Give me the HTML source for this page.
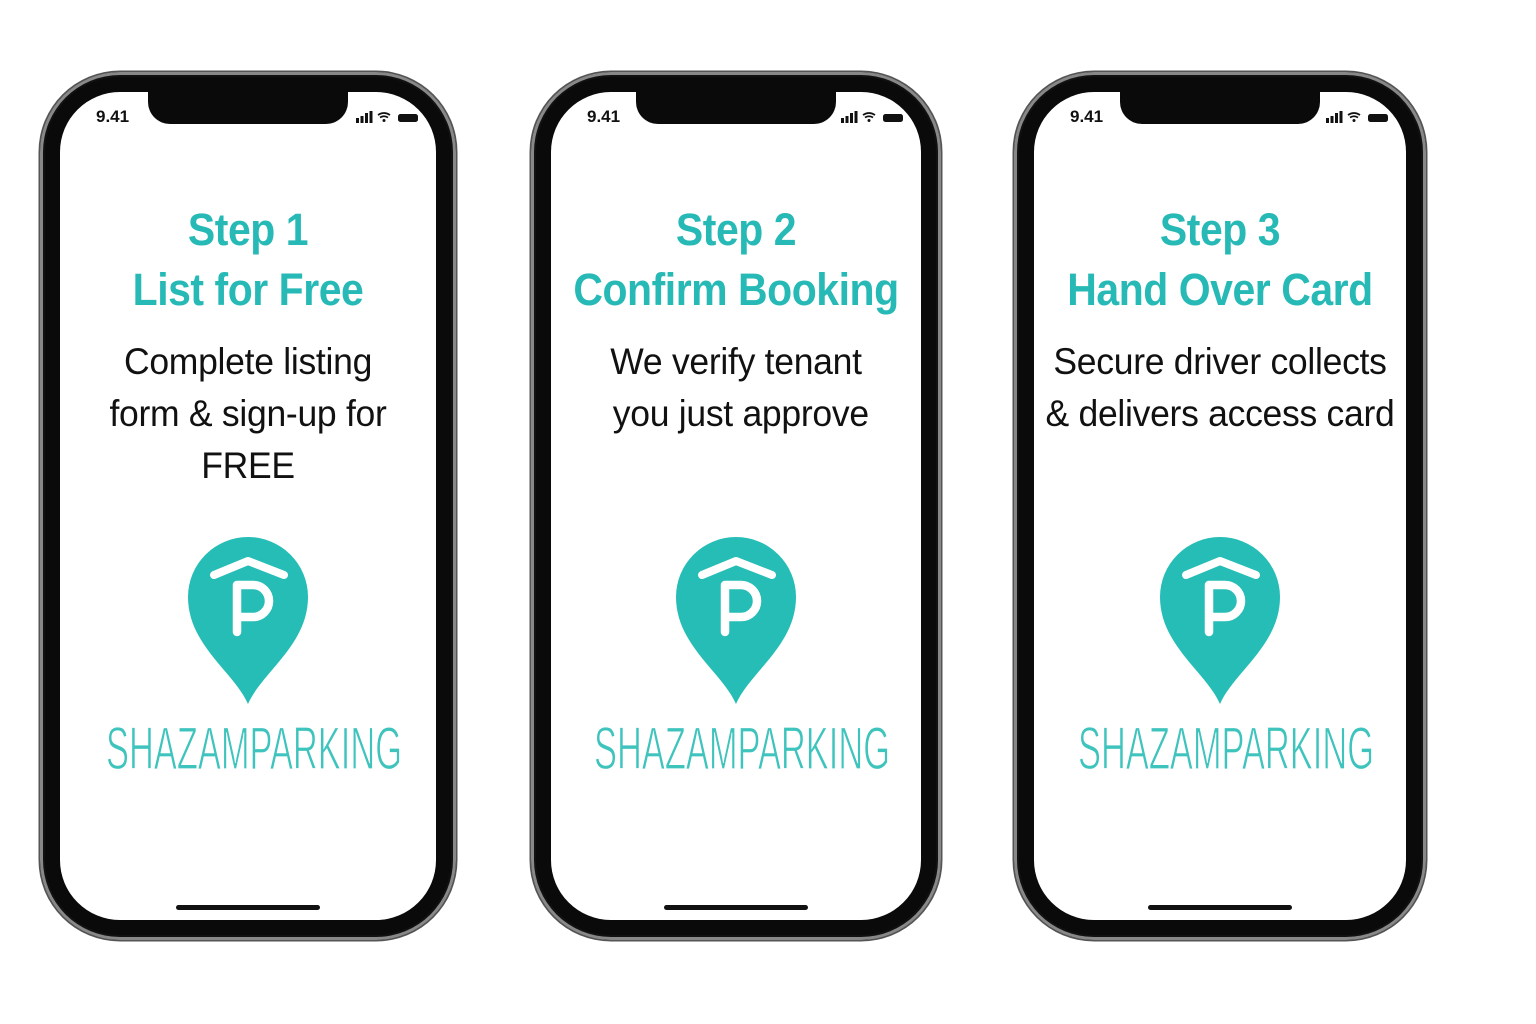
<!DOCTYPE html>
<html><head><meta charset="utf-8"><style>
body{margin:0;width:1536px;height:1024px;background:#fff;position:relative;overflow:hidden;font-family:"Liberation Sans",sans-serif}
.ph{position:absolute;top:72px;height:868px;border-radius:80px;background:#0a0a0a;box-shadow:0 0 0 1.5px #555,inset 0 0 0 3px #888,inset 0 0 0 5px #111}
.sc{position:absolute;left:20px;right:20px;top:20px;bottom:20px;background:#fff;border-radius:60px;overflow:hidden}
.notch{position:absolute;top:0;left:50%;transform:translateX(-50%);width:200px;height:32px;background:#0a0a0a;border-radius:0 0 22px 22px}
.time{position:absolute;left:36px;top:15px;font-weight:bold;font-size:17px;color:#111}
.st{position:absolute;right:18px;top:19px}
.title{position:absolute;left:-40px;right:-40px;top:108px;text-align:center;color:#27b9b6;font-weight:bold;font-size:45px;line-height:60px;letter-spacing:-0.5px;transform:scaleX(0.91)}
.body{position:absolute;left:-20px;right:-20px;top:244px;text-align:center;color:#111;font-size:37px;line-height:52px;letter-spacing:-0.3px;transform:scaleX(0.96)}
.logo{position:absolute;top:445px;left:50%;transform:translateX(-50%)}
.brand{position:absolute;top:630px;left:50%;transform:translateX(-48%)}
.home{position:absolute;bottom:10px;left:50%;transform:translateX(-50%);width:144px;height:5px;border-radius:3px;background:#111}
</style></head><body>

<div class="ph" style="left:40px;width:416px"><div class="sc">
<div class="notch"></div><div class="time">9.41</div>
<svg class="st" width="62" height="12" viewBox="0 0 62 12"><rect x="0" y="7" width="3" height="5" fill="#111"/><rect x="4.5" y="5" width="3" height="7" fill="#111"/><rect x="9" y="2" width="3" height="10" fill="#111"/><rect x="13.5" y="0" width="3" height="12" fill="#111"/><path d="M22 4 Q28 0 34 4 M24 6.5 Q28 4 32 6.5" stroke="#111" stroke-width="1.8" fill="none"/><circle cx="28" cy="9.5" r="1.5" fill="#111"/><rect x="42" y="3" width="20" height="8" rx="2.5" fill="#111"/></svg>
<div class="title">Step 1<br>List for Free</div>
<div class="body">Complete listing<br>form &amp; sign-up for<br>FREE</div>
<svg class="logo" width="122" height="168" viewBox="0 0 122 168"><path d="M61 167 C47 135 1 108 1 60 A60 60 0 0 1 121 60 C121 108 75 135 61 167Z" fill="#26bdb6"/><path d="M27 38 L61 24 L97 38" stroke="#fff" stroke-width="8" fill="none" stroke-linecap="round" stroke-linejoin="round"/><path d="M50 95 V48 H66 A16 16 0 0 1 66 80 H50" stroke="#fff" stroke-width="8.5" fill="none" stroke-linecap="round" stroke-linejoin="round"/></svg>
<svg class="brand" width="300" height="52"><text x="2" y="47" font-family="Liberation Sans Narrow,Liberation Sans,sans-serif" font-size="60" fill="#3ec3bd" stroke="#fff" stroke-width="1.2" textLength="296" lengthAdjust="spacingAndGlyphs">SHAZAMPARKING</text></svg>
<div class="home"></div>
</div></div>

<div class="ph" style="left:531px;width:410px"><div class="sc">
<div class="notch"></div><div class="time">9.41</div>
<svg class="st" width="62" height="12" viewBox="0 0 62 12"><rect x="0" y="7" width="3" height="5" fill="#111"/><rect x="4.5" y="5" width="3" height="7" fill="#111"/><rect x="9" y="2" width="3" height="10" fill="#111"/><rect x="13.5" y="0" width="3" height="12" fill="#111"/><path d="M22 4 Q28 0 34 4 M24 6.5 Q28 4 32 6.5" stroke="#111" stroke-width="1.8" fill="none"/><circle cx="28" cy="9.5" r="1.5" fill="#111"/><rect x="42" y="3" width="20" height="8" rx="2.5" fill="#111"/></svg>
<div class="title">Step 2<br>Confirm Booking</div>
<div class="body">We verify tenant<br>&nbsp;you just approve</div>
<svg class="logo" width="122" height="168" viewBox="0 0 122 168"><path d="M61 167 C47 135 1 108 1 60 A60 60 0 0 1 121 60 C121 108 75 135 61 167Z" fill="#26bdb6"/><path d="M27 38 L61 24 L97 38" stroke="#fff" stroke-width="8" fill="none" stroke-linecap="round" stroke-linejoin="round"/><path d="M50 95 V48 H66 A16 16 0 0 1 66 80 H50" stroke="#fff" stroke-width="8.5" fill="none" stroke-linecap="round" stroke-linejoin="round"/></svg>
<svg class="brand" width="300" height="52"><text x="2" y="47" font-family="Liberation Sans Narrow,Liberation Sans,sans-serif" font-size="60" fill="#3ec3bd" stroke="#fff" stroke-width="1.2" textLength="296" lengthAdjust="spacingAndGlyphs">SHAZAMPARKING</text></svg>
<div class="home"></div>
</div></div>

<div class="ph" style="left:1014px;width:412px"><div class="sc">
<div class="notch"></div><div class="time">9.41</div>
<svg class="st" width="62" height="12" viewBox="0 0 62 12"><rect x="0" y="7" width="3" height="5" fill="#111"/><rect x="4.5" y="5" width="3" height="7" fill="#111"/><rect x="9" y="2" width="3" height="10" fill="#111"/><rect x="13.5" y="0" width="3" height="12" fill="#111"/><path d="M22 4 Q28 0 34 4 M24 6.5 Q28 4 32 6.5" stroke="#111" stroke-width="1.8" fill="none"/><circle cx="28" cy="9.5" r="1.5" fill="#111"/><rect x="42" y="3" width="20" height="8" rx="2.5" fill="#111"/></svg>
<div class="title">Step 3<br>Hand Over Card</div>
<div class="body">Secure driver collects<br>&amp; delivers access card</div>
<svg class="logo" width="122" height="168" viewBox="0 0 122 168"><path d="M61 167 C47 135 1 108 1 60 A60 60 0 0 1 121 60 C121 108 75 135 61 167Z" fill="#26bdb6"/><path d="M27 38 L61 24 L97 38" stroke="#fff" stroke-width="8" fill="none" stroke-linecap="round" stroke-linejoin="round"/><path d="M50 95 V48 H66 A16 16 0 0 1 66 80 H50" stroke="#fff" stroke-width="8.5" fill="none" stroke-linecap="round" stroke-linejoin="round"/></svg>
<svg class="brand" width="300" height="52"><text x="2" y="47" font-family="Liberation Sans Narrow,Liberation Sans,sans-serif" font-size="60" fill="#3ec3bd" stroke="#fff" stroke-width="1.2" textLength="296" lengthAdjust="spacingAndGlyphs">SHAZAMPARKING</text></svg>
<div class="home"></div>
</div></div>

</body></html>
